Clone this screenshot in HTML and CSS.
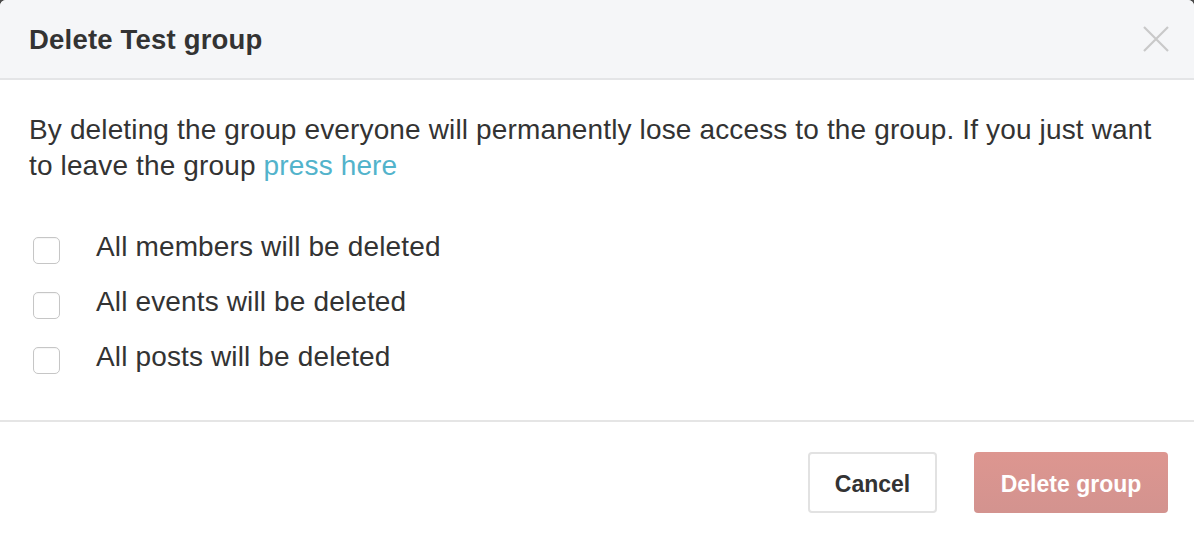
FILE: index.html
```html
<!DOCTYPE html>
<html>
<head>
<meta charset="utf-8">
<link rel="stylesheet" href="styles.css">
</head>
<body>
<div class="modal">
  <div class="modal-header">
    <h1 class="modal-title">Delete Test group</h1>
    <button class="close" aria-label="Close">
      <svg width="26" height="26" viewBox="0 0 26 26"><path d="M1 1 L25 25 M25 1 L1 25" stroke="#c9c9c9" stroke-width="2.2" fill="none"/></svg>
    </button>
  </div>
  <div class="modal-body">
    <p class="intro">By deleting the group everyone will permanently lose access to the group. If you just want to leave the group <a class="link" href="#">press here</a></p>
    <ul class="checks">
      <li class="check-row"><span class="box"></span><span class="label">All members will be deleted</span></li>
      <li class="check-row"><span class="box"></span><span class="label">All events will be deleted</span></li>
      <li class="check-row"><span class="box"></span><span class="label">All posts will be deleted</span></li>
    </ul>
  </div>
  <div class="modal-footer">
    <button class="btn btn-cancel">Cancel</button>
    <button class="btn btn-danger">Delete group</button>
  </div>
</div>
</body>
</html>
```
FILE: styles.css
```css
html, body {
  margin: 0;
  padding: 0;
  background: #4a4a4a;
}
body {
  font-family: "Liberation Sans", Arial, sans-serif;
  color: #333333;
}
.modal {
  width: 1194px;
  height: 542px;
  background: #ffffff;
  border-radius: 6px 6px 0 0;
  overflow: hidden;
  display: flex;
  flex-direction: column;
}
.modal-header {
  height: 78px;
  background: #f5f6f8;
  border-bottom: 2px solid #e4e5e7;
  display: flex;
  align-items: center;
  justify-content: space-between;
  padding: 0 25px 0 29px;
}
.modal-title {
  margin: 2px 0 0 0;
  font-size: 27.5px;
  font-weight: bold;
  letter-spacing: 0.2px;
  color: #333333;
  line-height: 1;
}
.close {
  border: 0;
  background: none;
  padding: 0;
  display: flex;
  cursor: pointer;
}
.modal-body {
  padding: 32px 29px 0 29px;
  height: 308px;
}
.intro {
  margin: 0;
  font-size: 28px;
  letter-spacing: 0.14px;
  line-height: 36px;
}
.link {
  color: #52b3cb;
  text-decoration: none;
}
.checks {
  list-style: none;
  margin: 35px 0 0 0;
  padding: 0;
}
.check-row {
  height: 55px;
  display: flex;
  align-items: center;
  font-size: 28px;
  letter-spacing: 0.14px;
}
.box {
  width: 25px;
  height: 25px;
  border: 1px solid #c6c6c6;
  border-radius: 5px;
  background: #ffffff;
  box-shadow: inset 0 1px 1px rgba(0,0,0,0.04);
  margin-left: 4px;
  margin-top: 8px;
  flex: none;
}
.label {
  margin-left: 36px;
}
.modal-footer {
  border-top: 2px solid #e5e5e5;
  padding: 30px 26px 29px 0;
  display: flex;
  justify-content: flex-end;
  gap: 37px;
}
.btn {
  height: 61px;
  padding: 4px 0 0 0;
  font-family: "Liberation Sans", Arial, sans-serif;
  font-size: 23px;
  font-weight: bold;
  border-radius: 4px;
  cursor: pointer;
}
.btn-cancel {
  width: 129px;
  background: #ffffff;
  color: #333333;
  border: 2px solid #e2e2e2;
}
.btn-danger {
  width: 194px;
  background: linear-gradient(#dd9690, #d3938f);
  color: #ffffff;
  border: 0;
}
```
